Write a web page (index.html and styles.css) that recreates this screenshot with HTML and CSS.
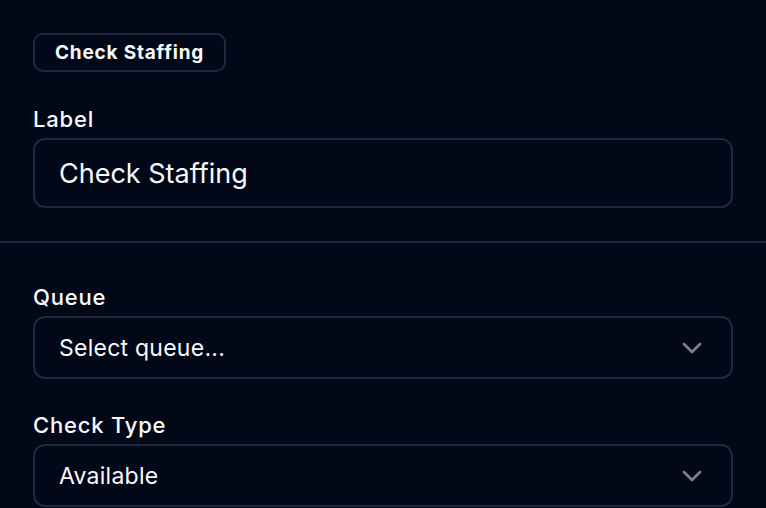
FILE: index.html
```html
<!DOCTYPE html>
<html>
<head>
<meta charset="utf-8">
<link rel="stylesheet" href="styles.css">
</head>
<body>
<div class="panel">
  <section class="top">
    <span class="badge">Check Staffing</span>
    <div class="field">
      <label class="label">Label</label>
      <div class="input input-lg">Check Staffing</div>
    </div>
  </section>
  <hr class="divider">
  <section class="bottom">
    <div class="field">
      <label class="label">Queue</label>
      <div class="input select">
        <span>Select queue...</span>
        <svg class="chev" viewBox="0 0 24 24" fill="none" stroke="currentColor" stroke-width="2" stroke-linecap="round" stroke-linejoin="round"><path d="m6 9 6 6 6-6"/></svg>
      </div>
    </div>
    <div class="field">
      <label class="label">Check Type</label>
      <div class="input select">
        <span>Available</span>
        <svg class="chev" viewBox="0 0 24 24" fill="none" stroke="currentColor" stroke-width="2" stroke-linecap="round" stroke-linejoin="round"><path d="m6 9 6 6 6-6"/></svg>
      </div>
    </div>
  </section>
</div>
</body>
</html>
```

FILE: styles.css
```css
* { box-sizing: border-box; }
html, body {
  margin: 0;
  padding: 0;
  background: #020817;
  color: #f8fafc;
  font-family: Inter, "Noto Sans", sans-serif;
  overflow: hidden;
}
.panel {
  width: 766px;
  height: 508px;
}
.top {
  padding: 33px 33px 0;
  display: flex;
  flex-direction: column;
  align-items: flex-start;
  gap: 34px;
}
.badge {
  display: inline-flex;
  align-items: center;
  height: 39px;
  padding: 0 20px;
  border: 2px solid #1e293b;
  border-radius: 10px;
  font-size: 19px;
  font-weight: 700;
  letter-spacing: 0.8px;
  line-height: 1;
}
.field {
  display: flex;
  flex-direction: column;
  gap: 6px;
  width: 700px;
}
.label {
  font-size: 22px;
  font-weight: 550;
  letter-spacing: 0.8px;
  line-height: 26px;
}
.input {
  display: flex;
  align-items: center;
  border: 2px solid #1e293b;
  border-radius: 12px;
  padding: 0 24px;
  height: 63px;
  font-size: 23px;
  letter-spacing: 0.25px;
}
.input-lg {
  height: 70px;
  font-size: 27px;
  letter-spacing: 0;
}
.divider {
  margin: 33px 0 0;
  border: 0;
  border-top: 2px solid #1e293b;
}
.bottom {
  padding: 41px 33px 0;
  display: flex;
  flex-direction: column;
  gap: 33px;
}
.select {
  justify-content: space-between;
  padding-right: 23px;
}
.chev {
  width: 32px;
  height: 32px;
  color: #f8fafc;
  opacity: 0.5;
}
```
